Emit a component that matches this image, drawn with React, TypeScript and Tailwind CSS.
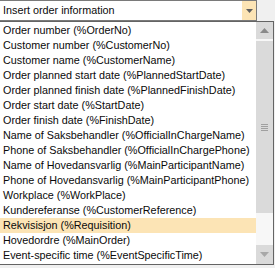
const ITEMS = [
  "Order number (%OrderNo)",
  "Customer number (%CustomerNo)",
  "Customer name (%CustomerName)",
  "Order planned start date (%PlannedStartDate)",
  "Order planned finish date (%PlannedFinishDate)",
  "Order start date (%StartDate)",
  "Order finish date (%FinishDate)",
  "Name of Saksbehandler (%OfficialInChargeName)",
  "Phone of Saksbehandler (%OfficialInChargePhone)",
  "Name of Hovedansvarlig (%MainParticipantName)",
  "Phone of Hovedansvarlig (%MainParticipantPhone)",
  "Workplace (%WorkPlace)",
  "Kundereferanse (%CustomerReference)",
  "Rekvisisjon (%Requisition)",
  "Hovedordre (%MainOrder)",
  "Event-specific time (%EventSpecificTime)",
];

const HIGHLIGHTED = "Rekvisisjon (%Requisition)";

function Arrow({ up, color }: { up?: boolean; color: string }) {
  return (
    <svg width="9" height="5" viewBox="0 0 9 5">
      <path d={up ? "M0 5 L4.5 0 L9 5 Z" : "M0 0 L9 0 L4.5 5 Z"} fill={color} />
    </svg>
  );
}

export default function App() {
  return (
    <div
      className="relative w-[275px] h-[268px] overflow-hidden bg-[#f0f0f0] text-[10.8px] text-[#0a0a0a]"
      style={{ fontFamily: '"Liberation Sans", Arial, sans-serif' }}
    >
      {/* Combo box */}
      <div className="flex w-[257px] h-[21px] bg-white border border-l-0 border-[#7a7a7a]">
        <div className="flex-1 flex items-center pl-[3px] leading-none">
          Insert order information
        </div>
        <div className="w-[14px] bg-[#fce4b5] flex items-center justify-center">
          <svg width="7" height="4" viewBox="0 0 7 4">
            <path d="M0 0 L7 0 L3.5 4 Z" fill="#5f5f5f" />
          </svg>
        </div>
      </div>

      {/* Drop-down list */}
      <div className="absolute left-0 top-[21px] flex w-[274px] h-[244px] bg-white border border-l-0 border-[#646464]">
        <div className="flex-1 flex flex-col pt-[1px]">
          {ITEMS.map((item) => (
            <div
              key={item}
              className={
                "h-[15px] flex items-center pl-[3px] whitespace-nowrap leading-none " +
                (item === HIGHLIGHTED ? "bg-[#fce4b5]" : "")
              }
            >
              {item}
            </div>
          ))}
        </div>

        {/* Scrollbar */}
        <div className="w-[17px] flex flex-col bg-[#f7f7f7]">
          <div className="h-[17px] bg-[#dadada] flex items-center justify-center">
            <Arrow up color="#8a8a8a" />
          </div>
          <div className="h-[2px]" />
          <div className="h-[172px] bg-[#dadada] flex items-center justify-center">
            <div className="flex flex-col gap-[1px] w-[7px]">
              <div className="h-px bg-[#a0a0a0]" />
              <div className="h-px bg-[#a0a0a0]" />
              <div className="h-px bg-[#a0a0a0]" />
              <div className="h-px bg-[#a0a0a0]" />
            </div>
          </div>
          <div className="flex-1" />
          <div className="h-[19px] bg-[#dadada] flex items-center justify-center">
            <Arrow color="#a8a8a8" />
          </div>
        </div>
      </div>
    </div>
  );
}
